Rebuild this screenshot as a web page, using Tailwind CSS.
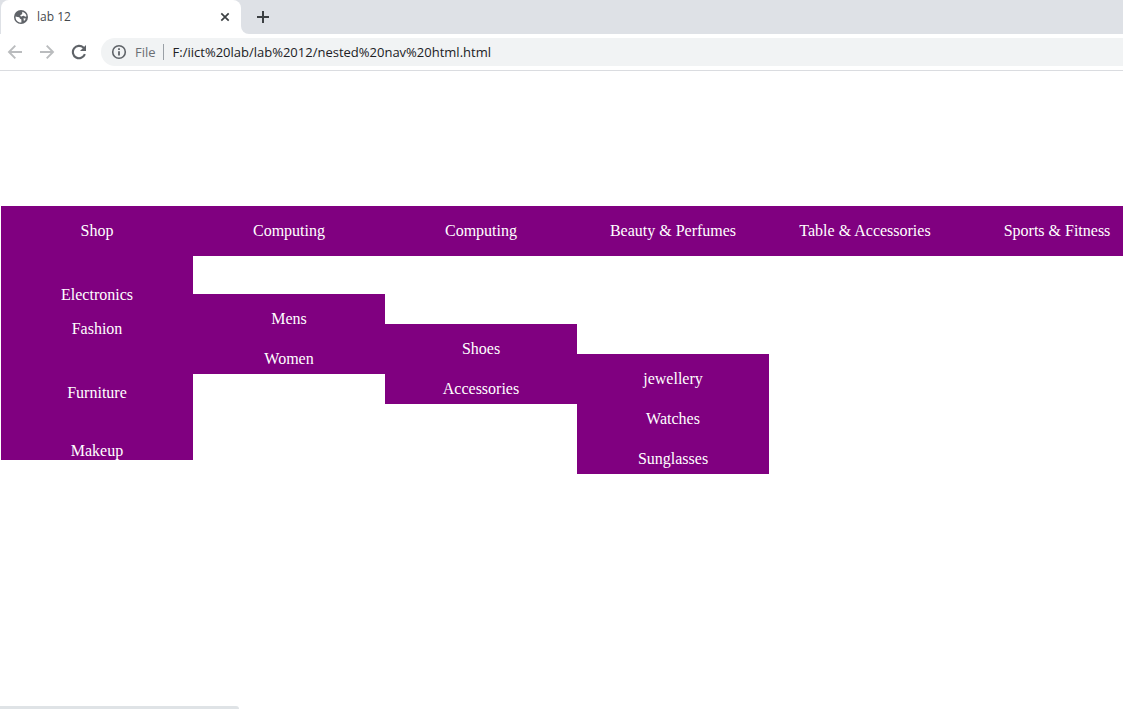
<!DOCTYPE html>
<html lang="en">
<head>
<meta charset="utf-8">
<title>lab 12</title>
<script src="https://cdn.jsdelivr.net/npm/@tailwindcss/browser@4"></script>
</head>
<body class="flex min-h-screen flex-col overflow-x-hidden bg-white font-['Open_Sans','Liberation_Sans',sans-serif]">
  <header class="border-b border-[#dadce0]">
    <div class="flex h-[34px] bg-[#dee1e6] pl-px">
      <div class="flex w-60 items-center rounded-t-lg bg-white pr-2 pl-3">
        <svg class="size-4 shrink-0" viewBox="0 0 16 16" aria-hidden="true">
          <circle cx="8" cy="8" r="7" fill="#5f6368"/>
          <path d="M2.600 7.400c1.500.3 2.700.5 3.600.9c.8.4.3 1.700 1.500 1.800c.9.1.7 1 .7 3.300C5 13.800 2.200 11 2.600 7.400zM9.300 2.700c2.500.6 4 2.600 4.200 4.600c-1 .9-1.700.3-2.300-.3c-.8-.7-1.700.1-2.600.4c-1.100.2-1.700-.7-1-1.400c.5-.5 1.500-.3 1.600-1.200z" fill="#fff"/>
          <path d="M10.500 9.300l2.300.3c-.4 1.300-1.100 2-1.900 2.500z" fill="#fff"/>
        </svg>
        <span class="flex-1 pl-2 text-xs text-[#45494d]">lab 12</span>
        <button type="button" aria-label="Close tab" class="flex size-4 items-center justify-center">
          <svg class="size-4" viewBox="0 0 16 16" fill="none" stroke="#3c4043" stroke-width="1.700"><path d="M4.300 4.300l7.400 7.400M11.700 4.300l-7.400 7.400"/></svg>
        </button>
      </div>
      <div class="flex flex-1 bg-white">
        <div class="flex flex-1 items-center rounded-bl-lg bg-[#dee1e6] pl-3.5">
          <button type="button" aria-label="New tab" class="flex size-4 items-center justify-center">
            <svg class="size-4" viewBox="0 0 16 16" fill="none" stroke="#3c4043" stroke-width="2"><path d="M8 2v12M2 8h12"/></svg>
          </button>
        </div>
      </div>
    </div>
    <div class="flex h-9 items-center bg-white pl-[7px]">
      <div class="flex gap-4">
        <button type="button" aria-label="Back" class="size-4">
          <svg class="size-4" viewBox="0 0 16 16" fill="none" stroke="#babcbe" stroke-width="1.900"><path d="M15 8H2.300M8.300 1.700L2 8l6.300 6.300"/></svg>
        </button>
        <button type="button" aria-label="Forward" class="size-4">
          <svg class="size-4" viewBox="0 0 16 16" fill="none" stroke="#babcbe" stroke-width="1.900"><path d="M1 8h12.700M7.700 1.700L14 8l-6.300 6.300"/></svg>
        </button>
        <button type="button" aria-label="Reload" class="size-4">
          <svg class="size-4" viewBox="0 0 16 16" fill="none"><path d="M13.900 10.200A6.200 6.200 0 1 1 12.400 3.600L13.500 4.800" stroke="#5f6368" stroke-width="2.100"/><path d="M15 1v6H9z" fill="#5f6368"/></svg>
        </button>
      </div>
      <div class="ml-3.5 flex h-7 flex-1 items-center rounded-l-full bg-[#f1f3f4] pl-2.5">
        <svg class="size-4 shrink-0" viewBox="0 0 16 16" fill="none" aria-hidden="true"><circle cx="8" cy="8" r="6.300" stroke="#5f6368" stroke-width="1.600"/><path d="M8 7.200v4.300M8 4.300v1.600" stroke="#5f6368" stroke-width="1.800"/></svg>
        <label for="address" class="ml-2 text-[13px] leading-5 text-[#6b6f74]">File</label>
        <span class="ml-[7px] h-4 w-px bg-[#9aa0a6]"></span>
        <input id="address" type="text" value="F:/iict%20lab/lab%2012/nested%20nav%20html.html" class="ml-[9px] min-w-0 flex-1 bg-transparent text-[13px] leading-5 text-[#202124] outline-none">
      </div>
    </div>
  </header>

  <main class="flex-1 pt-[135px] pl-px font-['Liberation_Serif',serif] text-base text-white">
    <nav aria-label="Shop categories">
      <ul class="flex text-center">
        <li class="w-48 shrink-0">
          <a href="#" class="block bg-[#800080] leading-[50px]">Shop</a>
          <ul class="bg-[#800080] pt-[30px] leading-[18px]">
            <li><a href="#" class="block">Electronics</a></li>
            <li class="pt-4"><a href="#" class="block">Fashion</a></li>
            <li class="pt-[46px]"><a href="#" class="block">Furniture</a></li>
            <li class="pt-10"><a href="#" class="block">Makeup</a></li>
          </ul>
        </li>
        <li class="w-48 shrink-0">
          <a href="#" class="block bg-[#800080] leading-[50px]">Computing</a>
          <ul class="mt-[38px] bg-[#800080] leading-[30px]">
            <li class="pt-2.5"><a href="#" class="block">Mens</a></li>
            <li class="pt-2.5"><a href="#" class="block">Women</a></li>
          </ul>
        </li>
        <li class="w-48 shrink-0">
          <a href="#" class="block bg-[#800080] leading-[50px]">Computing</a>
          <ul class="mt-[68px] bg-[#800080] leading-[30px]">
            <li class="pt-2.5"><a href="#" class="block">Shoes</a></li>
            <li class="pt-2.5"><a href="#" class="block">Accessories</a></li>
          </ul>
        </li>
        <li class="w-48 shrink-0">
          <a href="#" class="block bg-[#800080] leading-[50px]">Beauty &amp; Perfumes</a>
          <ul class="mt-[98px] bg-[#800080] leading-[30px]">
            <li class="pt-2.5"><a href="#" class="block">jewellery</a></li>
            <li class="pt-2.5"><a href="#" class="block">Watches</a></li>
            <li class="pt-2.5"><a href="#" class="block">Sunglasses</a></li>
          </ul>
        </li>
        <li class="w-48 shrink-0">
          <a href="#" class="block bg-[#800080] leading-[50px]">Table &amp; Accessories</a>
        </li>
        <li class="w-48 shrink-0">
          <a href="#" class="block bg-[#800080] leading-[50px]">Sports &amp; Fitness</a>
        </li>
      </ul>
    </nav>
  </main>
  <div class="h-[3px] w-[239px] rounded-tr-[3px] bg-[#dfe3e6]"></div>
</body>
</html>
